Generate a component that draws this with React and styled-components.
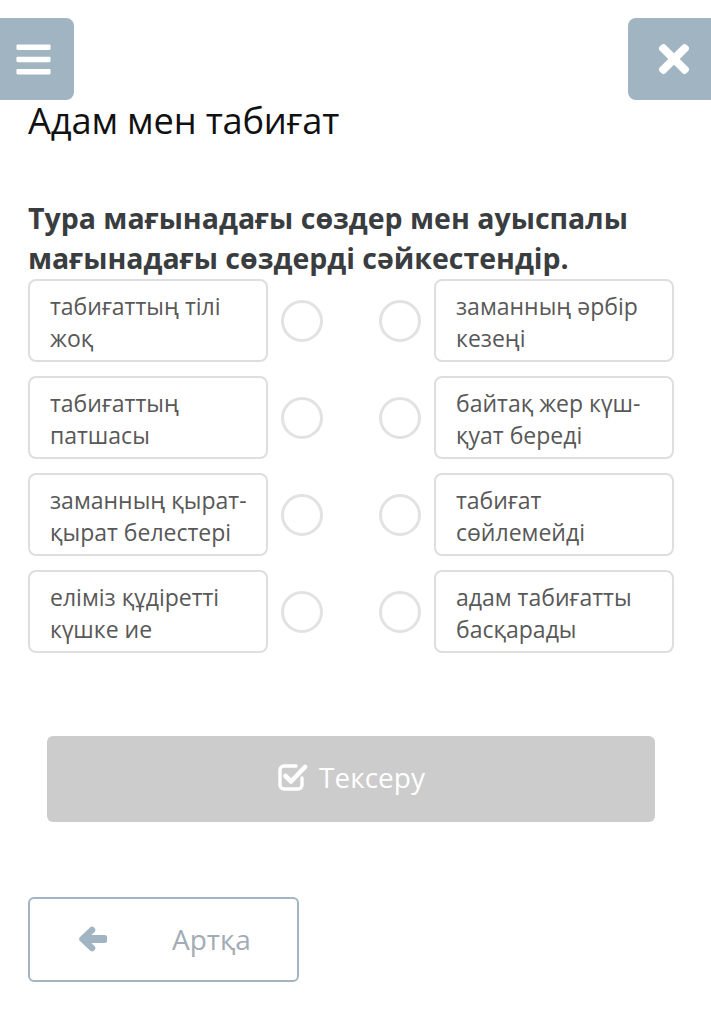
import React from "react";
import styled, { createGlobalStyle } from "styled-components";
import { FaBars, FaTimes } from "react-icons/fa";

const GlobalStyle = createGlobalStyle`
  html, body {
    margin: 0;
    padding: 0;
    background: #ffffff;
  }
  body {
    font-family: "Open Sans", "Noto Sans", "DejaVu Sans", sans-serif;
  }
  * {
    box-sizing: border-box;
  }
`;

const Page = styled.div`
  width: 711px;
  min-height: 1022px;
  background: #fff;
`;

const TopBar = styled.header`
  display: flex;
  justify-content: space-between;
  padding-top: 18px;
`;

const IconButton = styled.button`
  width: ${(p) => p.$width}px;
  height: 82px;
  border: none;
  background: #a1b4c2;
  color: #fff;
  display: flex;
  align-items: center;
  padding: 0 0 0 ${(p) => p.$iconPad}px;
  border-radius: ${(p) => (p.$side === "left" ? "0 8px 8px 0" : "8px 0 0 8px")};
  cursor: pointer;

  svg {
    font-size: ${(p) => p.$iconSize}px;
  }
`;

const Content = styled.main`
  padding: 0 37px 0 28px;
`;

const Title = styled.h1`
  margin: 0;
  font-size: 36.3px;
  font-weight: 400;
  line-height: 40px;
  color: #111;
  letter-spacing: -0.2px;
`;

const Question = styled.h2`
  margin: 58px 0 0;
  font-size: 28.5px;
  font-weight: 700;
  line-height: 40px;
  color: #3a3d40;
`;

const MatchGrid = styled.div`
  margin-top: 1px;
  display: grid;
  grid-template-columns: 240px 40px 1fr 40px 240px;
  column-gap: 14px;
  row-gap: 14px;
  align-items: center;
`;

const Card = styled.div`
  height: 83px;
  border: 2px solid #dedede;
  border-radius: 8px;
  padding: 9px 12px 0 20px;
  font-size: 23px;
  line-height: 32px;
  color: #585858;
`;

const Dot = styled.div`
  width: 42px;
  height: 42px;
  margin-left: -1px;
  border-radius: 50%;
  border: 3px solid #e2e2e2;
`;

const CheckButton = styled.button`
  margin: 83px 19px 0;
  width: 608px;
  height: 86px;
  border: none;
  border-radius: 6px;
  background: #cccccc;
  color: #fff;
  font-family: inherit;
  font-size: 28px;
  display: flex;
  align-items: center;
  justify-content: center;
  gap: 11px;
  padding: 0 0 4px;
`;

const BackButton = styled.button`
  margin-top: 75px;
  width: 271px;
  height: 85px;
  border: 2px solid #a3b5c2;
  border-radius: 6px;
  background: #fff;
  color: #a3acb4;
  font-family: inherit;
  font-size: 28px;
  display: flex;
  align-items: center;
  padding: 0 0 2px 48px;

  span {
    margin-left: 65px;
  }
`;

const CheckSquareIcon = () => (
  <svg width="31" height="30" viewBox="0 0 31 30" fill="none">
    <path
      d="M19 4H7a4 4 0 0 0-4 4v15a4 4 0 0 0 4 4h14a4 4 0 0 0 4-4v-7"
      stroke="#fff"
      strokeWidth="3.4"
      strokeLinecap="round"
    />
    <path
      d="M8.5 14l5.5 5.5L28 5"
      stroke="#fff"
      strokeWidth="4.6"
      strokeLinecap="round"
      strokeLinejoin="round"
    />
  </svg>
);

const ArrowLeftIcon = () => (
  <svg width="29" height="26" viewBox="0 0 29 26" fill="none">
    <path d="M26 13H8" stroke="#a1b4c2" strokeWidth="8" strokeLinecap="round" />
    <path
      d="M14 4L4.5 13l9.5 9"
      stroke="#a1b4c2"
      strokeWidth="6.5"
      strokeLinecap="round"
      strokeLinejoin="round"
    />
  </svg>
);

const pairs = [
  ["табиғаттың тілі жоқ", "заманның әрбір кезеңі"],
  ["табиғаттың патшасы", "байтақ жер күш-қуат береді"],
  ["заманның қырат-қырат белестері", "табиғат сөйлемейді"],
  ["еліміз құдіретті күшке ие", "адам табиғатты басқарады"],
];

export default function App() {
  return (
    <Page>
      <GlobalStyle />
      <TopBar>
        <IconButton $side="left" $width={74} $iconPad={14} $iconSize={39}>
          <FaBars />
        </IconButton>
        <IconButton $side="right" $width={83} $iconPad={24} $iconSize={44}>
          <FaTimes />
        </IconButton>
      </TopBar>
      <Content>
        <Title>Адам мен табиғат</Title>
        <Question>
          Тура мағынадағы сөздер мен ауыспалы мағынадағы сөздерді сәйкестендір.
        </Question>
        <MatchGrid>
          {pairs.map(([left, right]) => (
            <React.Fragment key={left}>
              <Card>{left}</Card>
              <Dot />
              <span />
              <Dot />
              <Card>{right}</Card>
            </React.Fragment>
          ))}
        </MatchGrid>
        <CheckButton>
          <CheckSquareIcon />
          Тексеру
        </CheckButton>
        <BackButton>
          <ArrowLeftIcon />
          <span>Артқа</span>
        </BackButton>
      </Content>
    </Page>
  );
}
